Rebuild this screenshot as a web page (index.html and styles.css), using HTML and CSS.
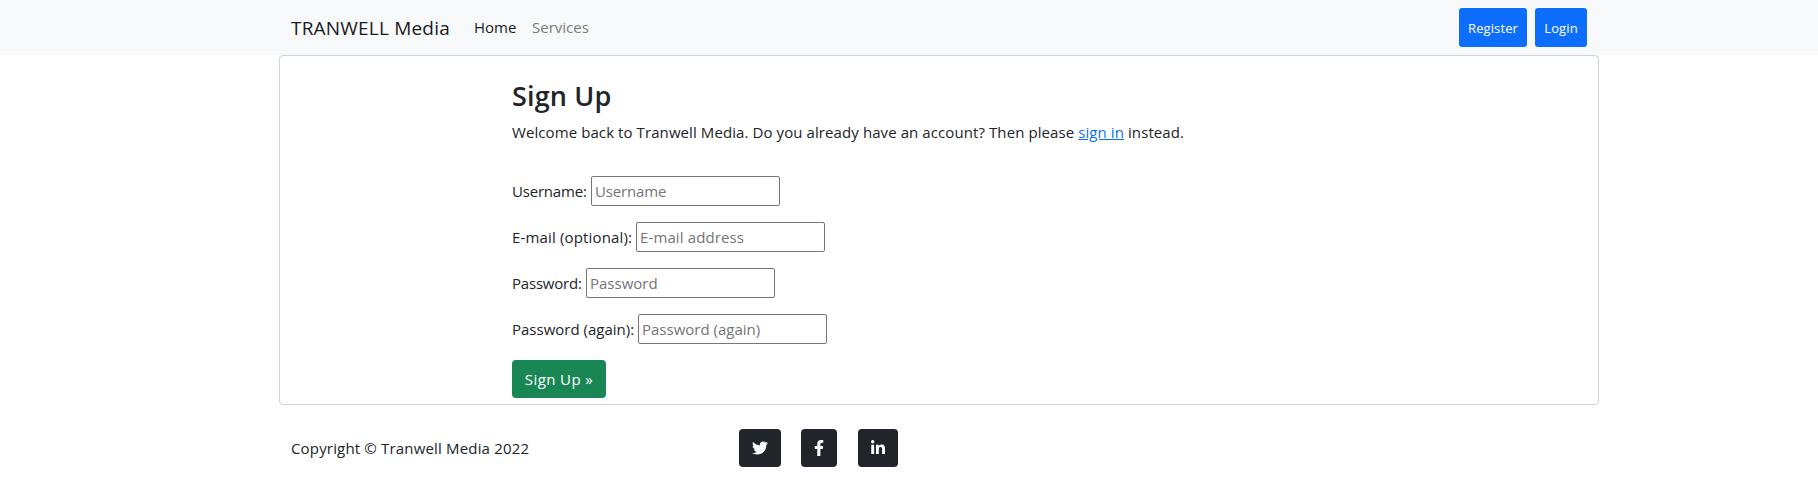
FILE: index.html
```html
<!DOCTYPE html>
<html lang="en">
<head>
<meta charset="utf-8">
<title>TRANWELL Media - Sign Up</title>
<link rel="stylesheet" href="styles.css">
</head>
<body>
<header class="navbar">
  <div class="container nav-inner">
    <a class="brand" href="#"><span>TRANWELL Media</span></a>
    <nav class="nav-links">
      <a class="nav-link home active" href="#"><span>Home</span></a>
      <a class="nav-link services" href="#"><span>Services</span></a>
    </nav>
    <div class="nav-actions">
      <a class="btn btn-primary register" href="#">Register</a>
      <a class="btn btn-primary login" href="#">Login</a>
    </div>
  </div>
</header>
<main class="container card">
  <h1 class="title"><span>Sign Up</span></h1>
  <p class="intro"><span>Welcome back to Tranwell Media. Do you already have an account? Then please <a class="link" href="#">sign in</a> instead.</span></p>
  <form class="form">
    <div class="field"><label class="label label-username" for="username">Username:</label><input class="input input-username" id="username" type="text" placeholder="Username"></div>
    <div class="field"><label class="label label-email" for="email">E-mail (optional):</label><input class="input input-email" id="email" type="email" placeholder="E-mail address"></div>
    <div class="field"><label class="label label-password" for="password">Password:</label><input class="input" id="password" type="password" placeholder="Password"></div>
    <div class="field"><label class="label label-again" for="again">Password (again):</label><input class="input" id="again" type="password" placeholder="Password (again)"></div>
    <button class="btn btn-success" type="button">Sign Up »</button>
  </form>
</main>
<footer class="container footer">
  <p class="copyright"><span>Copyright © Tranwell Media 2022</span></p>
  <div class="social">
    <a class="btn btn-dark twitter" href="#" aria-label="Twitter"><svg width="16" height="16" viewBox="0 0 512 512"><path fill="#fff" d="M459.37 151.716c.325 4.548.325 9.097.325 13.645 0 138.72-105.583 298.558-298.558 298.558-59.452 0-114.68-17.219-161.137-47.106 8.447.974 16.568 1.299 25.34 1.299 49.055 0 94.213-16.568 130.274-44.832-46.132-.975-84.792-31.188-98.112-72.772 6.498.974 12.995 1.624 19.818 1.624 9.421 0 18.843-1.3 27.614-3.573-48.081-9.747-84.143-51.98-84.143-102.985v-1.299c13.969 7.797 30.214 12.67 47.431 13.319-28.264-18.843-46.781-51.005-46.781-87.391 0-19.492 5.197-37.36 14.294-52.954 51.655 63.675 129.3 105.258 216.365 109.807-1.624-7.797-2.599-15.918-2.599-24.04 0-57.828 46.782-104.934 104.934-104.934 30.213 0 57.502 12.67 76.67 33.137 23.715-4.548 46.456-13.32 66.599-25.34-7.798 24.366-24.366 44.833-46.132 57.827 21.117-2.273 41.584-8.122 60.426-16.243-14.292 20.791-32.161 39.308-52.628 54.253z"/></svg></a>
    <a class="btn btn-dark facebook" href="#" aria-label="Facebook"><svg width="10" height="16" viewBox="0 0 320 512"><path fill="#fff" d="M279.14 288l14.22-92.66h-88.91v-60.13c0-25.35 12.42-50.06 52.24-50.06h40.42V6.26S260.43 0 225.36 0c-73.22 0-121.08 44.38-121.08 124.72v70.62H22.89V288h81.39v224h100.17V288z"/></svg></a>
    <a class="btn btn-dark linkedin" href="#" aria-label="LinkedIn"><svg width="14" height="16" viewBox="0 0 448 512"><path fill="#fff" d="M100.28 448H7.4V148.9h92.88zM53.79 108.1C24.09 108.1 0 83.5 0 53.8a53.79 53.79 0 0 1 107.58 0c0 29.7-24.1 54.3-53.79 54.3zM447.9 448h-92.68V302.4c0-34.7-.7-79.2-48.29-79.2-48.29 0-55.69 37.7-55.69 76.7V448h-92.78V148.9h89.08v40.8h1.3c12.4-23.5 42.69-48.3 87.88-48.3 94 0 111.28 61.9 111.28 142.3V448z"/></svg></a>
  </div>
</footer>
</body>
</html>
```
FILE: styles.css
```css
* { box-sizing: border-box; }
body {
  margin: 0;
  background: #fff;
  color: #212529;
  font-family: "Open Sans", "Noto Sans", sans-serif;
  font-size: 15px;
  line-height: 24px;
}
a { color: inherit; text-decoration: none; }
h1, p { margin: 0; }
.container { width: 1320px; margin-left: 279px; }
.navbar { height: 55px; background: #f8f9fb; }
.nav-inner { display: flex; align-items: center; height: 55px; padding: 0 12px; }
.brand { width: 183px; font-size: 19px; line-height: 30px; letter-spacing: 0.2px; color: #1a1b1c; white-space: nowrap; }
.nav-links { display: flex; padding-bottom: 1px; }
.nav-link { color: #7b7c7d; white-space: nowrap; }
.nav-link.active { color: #1a1b1c; }
.home { width: 58px; }
.nav-actions { display: flex; gap: 8px; margin-left: auto; }
.btn {
  display: flex;
  align-items: center;
  justify-content: center;
  padding: 0;
  border: 0;
  border-radius: 4px;
  color: #fff;
  font-family: inherit;
  white-space: nowrap;
}
.btn-primary { height: 39px; background: #0d6efd; border-radius: 3px; font-size: 13px; letter-spacing: 0.1px; }
.register { width: 68px; }
.login { width: 52px; }
.card { height: 350px; padding: 23px 232px 0; border: 1px solid #ced4da; border-radius: 4px; }
.title { font-size: 27px; line-height: 34px; font-weight: 600; letter-spacing: 0.15px; }
.intro { margin-top: 7px; letter-spacing: 0.088px; white-space: nowrap; }
.link { color: #0d6efd; text-decoration: underline; }
.form { display: flex; flex-direction: column; gap: 16px; margin-top: 32px; }
.field { display: flex; align-items: center; height: 30px; }
.label { white-space: nowrap; }
.label-username { width: 79px; letter-spacing: -0.2px; }
.label-email { width: 124px; letter-spacing: 0.16px; }
.label-password { width: 74px; letter-spacing: -0.2px; }
.label-again { width: 126px; }
.input {
  width: 189px;
  height: 30px;
  padding: 1px 3px;
  border: 1px solid #767676;
  border-radius: 2px;
  background: #fff;
  font: inherit;
}
.input-username { letter-spacing: -0.15px; }
.input-email { letter-spacing: 0.12px; }
.input::placeholder { color: #757575; opacity: 1; }
.btn-success { width: 94px; height: 38px; background: #198754; font-size: 15px; letter-spacing: 0.4px; }
.footer { display: flex; align-items: center; height: 38px; margin-top: 24px; padding-left: 12px; }
.copyright { width: 448px; letter-spacing: 0.17px; white-space: nowrap; }
.social { display: flex; }
.btn-dark { height: 38px; background: #212529; }
.twitter { width: 42px; }
.facebook { width: 36px; margin-left: 20px; }
.linkedin { width: 40px; margin-left: 21px; }
```
